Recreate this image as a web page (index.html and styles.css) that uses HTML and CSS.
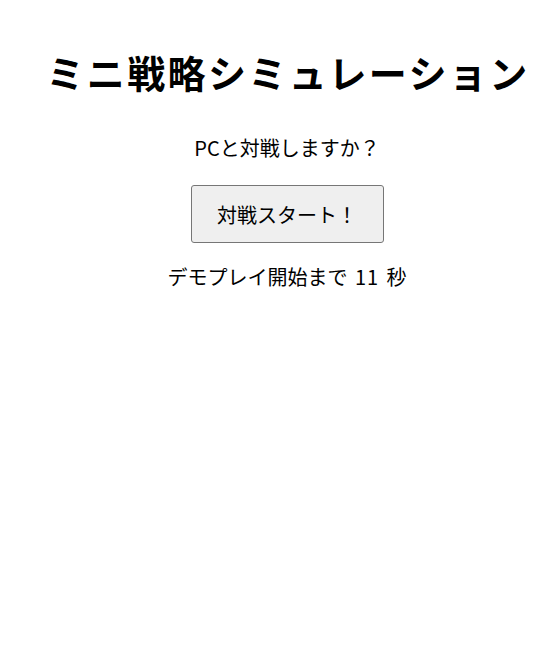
FILE: index.html
```html
<!DOCTYPE html>
<html lang="ja">
<head>
<meta charset="utf-8">
<title>ミニ戦略シミュレーション</title>
<link rel="stylesheet" href="styles.css">
</head>
<body>
<main class="app">
  <h1 class="title">ミニ戦略シミュレーション</h1>
  <p class="question">PCと対戦しますか？</p>
  <button class="start-btn" type="button">対戦スタート！</button>
  <p class="countdown">デモプレイ開始まで <span class="count">11</span> 秒</p>
</main>
</body>
</html>
```

FILE: styles.css
```css
html, body {
  margin: 0;
  padding: 0;
  background: #ffffff;
}

body {
  font-family: "Noto Sans CJK JP", "Noto Sans", sans-serif;
  color: #000000;
}

.app {
  display: flex;
  flex-direction: column;
  align-items: center;
  padding: 50px 0 0 38px;
  text-align: center;
}

.title {
  margin: 0 0 0 2px;
  font-size: 38px;
  line-height: 44px;
  font-weight: 700;
  letter-spacing: 2.4px;
  white-space: nowrap;
}

.question {
  margin: 40px 0 0;
  font-size: 20px;
  line-height: 28px;
}

.start-btn {
  margin-top: 23px;
  width: 193px;
  height: 58px;
  font-family: inherit;
  font-size: 20px;
  color: #000;
  background: #efefef;
  border: 1px solid #767676;
  border-radius: 3px;
  padding: 0;
}

.countdown {
  margin: 20px 0 0;
  font-size: 20px;
  line-height: 28px;
}

.count {
  margin: 0 3px;
  letter-spacing: 1px;
}
```
